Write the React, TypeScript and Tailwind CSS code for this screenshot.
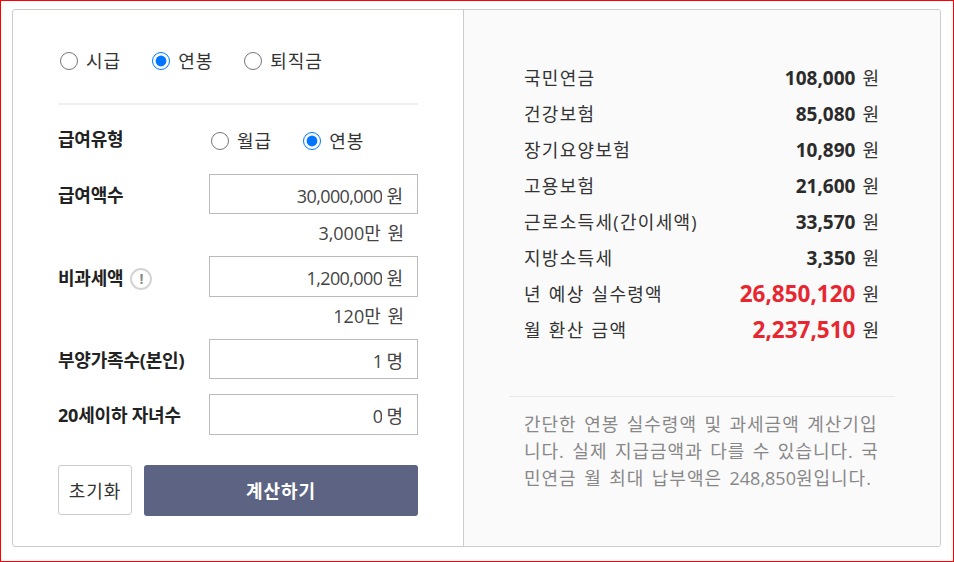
import React from 'react';

const font = { fontFamily: '"Open Sans", "Noto Sans CJK KR", sans-serif' };

function Radio({ label, checked, name }: { label: string; checked?: boolean; name: string }) {
  return (
    <label className="flex items-center gap-[8px] text-[18px] leading-[24px] tracking-[1px] text-[#333]">
      <input type="radio" name={name} defaultChecked={checked} className="m-0 h-[18px] w-[18px] accent-[#0075ff]" />
      {label}
    </label>
  );
}

function Field({ label, value, unit, hint, icon, h = 'h-[41px]', labelPad = 'pt-0' }: { label: string; value: string; unit: string; hint?: string; icon?: boolean; h?: string; labelPad?: string }) {
  return (
    <div>
      <div className="flex items-center justify-between">
        <div className={`flex items-center gap-[7px] text-[18px] font-bold tracking-[-0.2px] text-[#222] ${labelPad}`}>
          {label}
          {icon && (
            <span className="flex h-[22px] w-[22px] items-center justify-center rounded-full border-2 border-[#d4d4d4] text-[14px] font-bold text-[#888]">!</span>
          )}
        </div>
        <div className={`flex w-[209px] items-center justify-end gap-[4px] border border-[#bbb] bg-white pt-[4px] pr-[14px] text-[18px] text-[#444] ${h}`}>
          <input readOnly value={value} className="w-[150px] bg-transparent text-right tracking-[-0.6px] outline-none" />
          <span>{unit}</span>
        </div>
      </div>
      {hint && <div className="h-[42px] pt-[6px] pr-[14px] text-right text-[18px] leading-[26px] [word-spacing:2px] text-[#444]">{hint}</div>}
    </div>
  );
}

function Row({ label, value, red }: { label: string; value: string; red?: boolean }) {
  return (
    <div className="flex h-[36px] items-center justify-between text-[18px] text-[#333]">
      <span className="tracking-[1.3px] [word-spacing:1px]">{label}</span>
      <span className="flex items-center gap-[7px]">
        <b className={red ? 'text-[22.5px] font-bold text-[#e8262f]' : 'text-[19px] font-bold text-[#2b2b2b]'}>{value}</b>
        원
      </span>
    </div>
  );
}

export default function App() {
  return (
    <div className="h-[562px] w-[954px] border border-[#ff0000] bg-white pt-[8px] pl-[11px]" style={font}>
      <div className="flex h-[538px] w-[929px] overflow-hidden rounded-[3px] border border-[#ccc]">
        <div className="w-[451px] shrink-0 border-r border-[#ccc] px-[45px] pt-[39px]">
          <div className="flex gap-[31px] pl-[2px]">
            <Radio name="a" label="시급" />
            <Radio name="a" label="연봉" checked />
            <Radio name="a" label="퇴직금" />
          </div>
          <div className="mt-[30px] h-[2px] w-[360px] bg-[#f0f0f0]" />
          <div className="w-[360px]">
            <div className="mt-[22px] mb-[19px] flex h-[28px] items-center justify-between">
              <span className="pb-[4px] text-[18px] font-bold tracking-[-0.2px] text-[#222]">급여유형</span>
              <div className="flex w-[207px] gap-[31px]">
                <Radio name="b" label="월급" />
                <Radio name="b" label="연봉" checked />
              </div>
            </div>
            <Field label="급여액수" value="30,000,000" unit="원" hint="3,000만 원" h="h-[40px]" labelPad="pt-[2px]" />
            <Field label="비과세액" value="1,200,000" unit="원" hint="120만 원" icon labelPad="pt-[4px]" />
            <Field label="부양가족수(본인)" value="1" unit="명" h="h-[40px]" labelPad="pt-[2px]" />
            <div className="h-[15px]" />
            <Field label="20세이하 자녀수" value="0" unit="명" labelPad="pt-[2px]" />
            <div className="mt-[30px] flex gap-[12px]">
              <button className="h-[50px] w-[74px] rounded-[3px] border border-[#ccc] bg-white pt-[2px] text-[18px] tracking-[1px] text-[#333]">초기화</button>
              <button className="h-[51px] flex-1 rounded-[3px] bg-[#5c6383] pt-[2px] text-[18px] font-bold tracking-[1px] text-white">계산하기</button>
            </div>
          </div>
        </div>
        <div className="flex-1 bg-[#fafafa] pt-[50px]">
          <div className="pr-[61px] pl-[60px]">
            <Row label="국민연금" value="108,000" />
            <Row label="건강보험" value="85,080" />
            <Row label="장기요양보험" value="10,890" />
            <Row label="고용보험" value="21,600" />
            <Row label="근로소득세(간이세액)" value="33,570" />
            <Row label="지방소득세" value="3,350" />
            <Row label="년 예상 실수령액" value="26,850,120" red />
            <Row label="월 환산 금액" value="2,237,510" red />
          </div>
          <div className="mt-[48px] ml-[45px] h-px w-[386px] bg-[#e8e8e8]" />
          <p className="mt-[14px] mr-[61px] ml-[60px] text-[18px] leading-[27px] tracking-[1px] [word-spacing:1.8px] break-all text-[#888]">
            간단한 연봉 실수령액 및 과세금액 계산기입니다. 실제 지급금액과 다를 수 있습니다. 국민연금 월 최대 납부액은 <span className="tracking-normal">248,850</span>원입니다.
          </p>
        </div>
      </div>
    </div>
  );
}
